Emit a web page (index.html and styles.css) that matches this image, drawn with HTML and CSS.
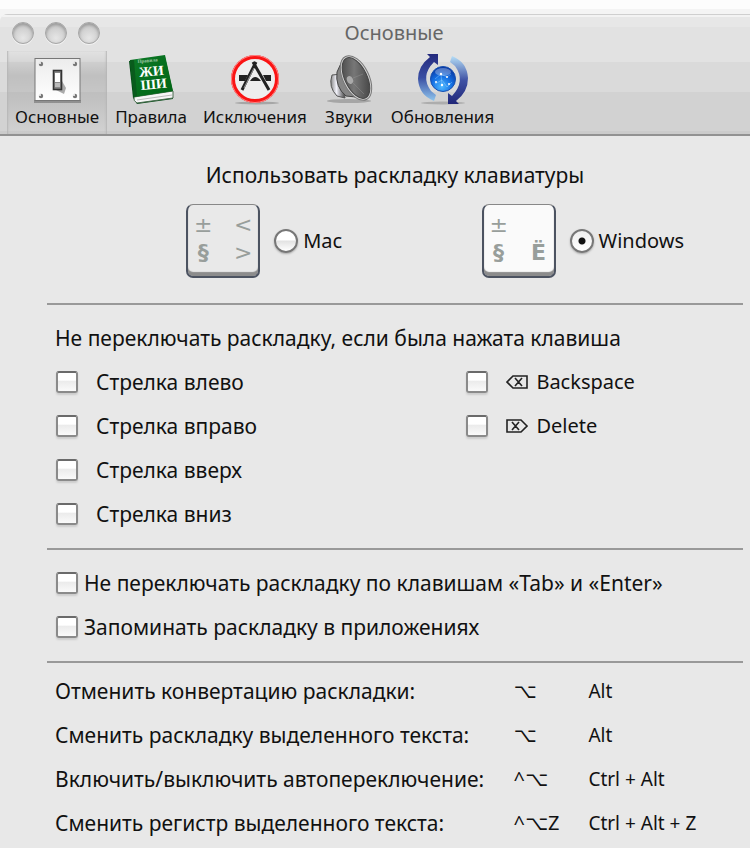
FILE: index.html
```html
<!DOCTYPE html>
<html lang="ru">
<head>
    <meta charset="UTF-8">
    <meta name="viewport" content="width=device-width, initial-scale=1.0">
    <title>Основные</title>
    <link rel="stylesheet" href="styles.css">
</head>
<body>
    <div class="window">
        <header class="header">
            <div class="titlebar">
                <div class="lights">
                    <span class="light"></span>
                    <span class="light"></span>
                    <span class="light"></span>
                </div>
                <h1 class="title">Основные</h1>
            </div>

            <nav class="toolbar">
                <button type="button" class="tool active">
                    <svg class="tool-icon" viewBox="0 0 52 52">
                        <defs>
                            <linearGradient id="plate" x1="0" y1="0" x2="0" y2="1">
                                <stop offset="0" stop-color="#ececec"/>
                                <stop offset="1" stop-color="#fff"/>
                            </linearGradient>
                        </defs>
                        <path d="M3 48.500h47" stroke="#555" stroke-width="3" opacity=".45"/>
                        <rect x="4" y="5.500" width="45" height="42" fill="url(#plate)" stroke="#777"/>
                        <g fill="#777">
                            <circle cx="10" cy="11" r="2.200"/><circle cx="44" cy="11" r="2.200"/>
                            <circle cx="10" cy="43" r="2.200"/><circle cx="44" cy="43" r="2.200"/>
                        </g>
                        <g fill="#fff">
                            <circle cx="9" cy="10" r="1"/><circle cx="43" cy="10" r="1"/>
                            <circle cx="9" cy="42" r="1"/><circle cx="43" cy="42" r="1"/>
                        </g>
                        <path d="M31 28l4 7-2 6-8-4z" fill="#aaa"/>
                        <rect x="22.500" y="17.500" width="8" height="19" fill="#888" stroke="#333" stroke-width="1.600"/>
                        <rect x="24" y="20" width="5" height="9" fill="#fff"/>
                        <path d="M24 30h5v4h-5z" fill="#bbb"/>
                    </svg>
                    <span>Основные</span>
                </button>
                <button type="button" class="tool">
                    <svg class="tool-icon" viewBox="0 0 52 52">
                        <defs>
                            <linearGradient id="cover" x1="0" y1="0" x2="1" y2="1">
                                <stop offset="0" stop-color="#0d7a28"/>
                                <stop offset="1" stop-color="#006414"/>
                            </linearGradient>
                        </defs>
                        <path d="M4 8l4 37 4 6 36-5v-7L40 4z" fill="#064d18"/>
                        <path d="M9 44l39-6v7l-36 5q-4-2-3-6z" fill="#f6f6f6" stroke="#476b4d" stroke-width="1"/>
                        <path d="M12 47l35-5" stroke="#bbb"/>
                        <path d="M5 7L40 2l8 36-39 6z" fill="url(#cover)"/>
                        <path d="M5 7l4 37 3-1L9 7z" fill="#095b1d"/>
                        <g transform="rotate(-5 26 24)" fill="#fff" text-anchor="middle" class="book-text">
                            <text x="24" y="9" font-size="5" opacity=".6">Правила</text>
                            <text x="27" y="23" font-size="14">ЖИ</text>
                            <text x="28" y="36" font-size="14">ШИ</text>
                        </g>
                    </svg>
                    <span>Правила</span>
                </button>
                <button type="button" class="tool">
                    <svg class="tool-icon" viewBox="0 0 52 52">
                        <ellipse cx="28" cy="50" rx="22" ry="1.500" fill="#888" opacity=".6"/>
                        <circle cx="26" cy="26" r="22" fill="#eee" stroke="#fa1414" stroke-width="4"/>
                        <circle cx="26" cy="26" r="23.500" fill="none" stroke="#ff8585" stroke-width="1"/>
                        <path d="M10 22h9l-3 6h-6zM34 22h8v6h-5zM21 28q5-8 11 0z" fill="#222"/>
                        <path d="M27 9L13 37M24 9l16 28" stroke="#222" stroke-width="3" fill="none"/>
                        <path d="M25 15l-10 20" stroke="#999" stroke-width="1"/>
                    </svg>
                    <span>Исключения</span>
                </button>
                <button type="button" class="tool">
                    <svg class="tool-icon" viewBox="0 0 52 52">
                        <defs>
                            <linearGradient id="cone" x1="0" y1="0" x2="1" y2="1">
                                <stop offset="0" stop-color="#3e3e3e"/>
                                <stop offset=".45" stop-color="#777"/>
                                <stop offset="1" stop-color="#383838"/>
                            </linearGradient>
                            <linearGradient id="magnet" x1="0" y1="0" x2="1" y2="0">
                                <stop offset="0" stop-color="#8a8a8a"/>
                                <stop offset=".4" stop-color="#f2f2fa"/>
                                <stop offset="1" stop-color="#444"/>
                            </linearGradient>
                        </defs>
                        <ellipse cx="26" cy="48" rx="22" ry="2" fill="#888" opacity=".6"/>
                        <path d="M9 22q-4 12 5 21l8 2-3-24z" fill="url(#magnet)" stroke="#555"/>
                        <path d="M14 19l6-13 13 38-10-1q-11-9-9-24z" fill="#858585" stroke="#444"/>
                        <ellipse cx="33" cy="25" rx="13" ry="24" transform="rotate(-26 33 25)" fill="#d0d0d0" stroke="#777"/>
                        <ellipse cx="33" cy="25" rx="11" ry="22" transform="rotate(-26 33 25)" fill="url(#cone)" stroke="#444"/>
                        <ellipse cx="27" cy="27" rx="3" ry="4" transform="rotate(-24 27 27)" fill="#aaa"/>
                        <path d="M29 29l12 12M30 25l10-4" stroke="#999" opacity=".4"/>
                    </svg>
                    <span>Звуки</span>
                </button>
                <button type="button" class="tool">
                    <svg class="tool-icon" viewBox="0 0 52 52">
                        <defs>
                            <linearGradient id="arrowLeft" x1="0" y1="0" x2="0" y2="1">
                                <stop offset="0" stop-color="#242a7d"/>
                                <stop offset=".5" stop-color="#394da2"/>
                                <stop offset="1" stop-color="#8fc5ed"/>
                            </linearGradient>
                            <linearGradient id="arrowRight" x1="0" y1="1" x2="0" y2="0">
                                <stop offset="0" stop-color="#202678"/>
                                <stop offset=".5" stop-color="#4053a5"/>
                                <stop offset="1" stop-color="#b5def7"/>
                            </linearGradient>
                            <radialGradient id="globe" cx=".45" cy=".8" r=".8">
                                <stop offset="0" stop-color="#50b9ff"/>
                                <stop offset=".5" stop-color="#1470e4"/>
                                <stop offset="1" stop-color="#07329d"/>
                            </radialGradient>
                        </defs>
                        <ellipse cx="26" cy="50" rx="22" ry="1.500" fill="#888" opacity=".5"/>
                        <path d="M10 1h11v11l-4-3Q3 23 14 38l5 4-2 6Q2 42 1 26 1 13 13 4z" fill="url(#arrowLeft)"/>
                        <path d="M42 51H31V40l4 3q14-15 3-30l-5-4 2-6q15 6 16 22 0 14-12 23z" fill="url(#arrowRight)"/>
                        <circle cx="26" cy="26" r="12.500" fill="url(#globe)" stroke="#164fb0"/>
                        <ellipse cx="26" cy="19" rx="8" ry="4" fill="#fff" opacity=".3"/>
                        <path d="M18 26l6-5 6 3 4-3M18 31l7-4 5 7 5-5M24 21l1 12" stroke="#a4dcff" stroke-width=".4" fill="none"/>
                        <g fill="#fff">
                            <circle cx="24" cy="21" r="1.200"/><circle cx="30" cy="24" r="1"/><circle cx="19" cy="29" r="1"/>
                            <circle cx="25" cy="32" r="1.200"/><circle cx="32" cy="31" r="1"/>
                        </g>
                    </svg>
                    <span>Обновления</span>
                </button>
            </nav>
        </header>

        <main class="content">
            <section class="section layout-section">
                <h2 class="heading">Использовать раскладку клавиатуры</h2>
                <div class="layouts">
                    <label class="layout">
                        <span class="key key-mac"><span>±</span><span>&lt;</span><b>§</b><span>&gt;</span></span>
                        <input type="radio" name="layout" class="radio">
                        <span>Mac</span>
                    </label>
                    <label class="layout">
                        <span class="key"><span>±</span><span></span><b>§</b><b>Ё</b></span>
                        <input type="radio" name="layout" class="radio" checked>
                        <span>Windows</span>
                    </label>
                </div>
            </section>

            <section class="section">
                <h2 class="row">Не переключать раскладку, если была нажата клавиша</h2>
                <div class="keys">
                    <div class="keys-column">
                        <label class="row option"><input type="checkbox" class="check">Стрелка влево</label>
                        <label class="row option"><input type="checkbox" class="check">Стрелка вправо</label>
                        <label class="row option"><input type="checkbox" class="check">Стрелка вверх</label>
                        <label class="row option"><input type="checkbox" class="check">Стрелка вниз</label>
                    </div>
                    <div class="keys-column">
                        <label class="row option">
                            <input type="checkbox" class="check">
                            <span class="key-name">
                                <svg class="key-icon" viewBox="0 0 22 16"><path d="M1 8l6-6h14v12H7zM9 4l7 8M16 4l-7 8"/></svg>
                                Backspace
                            </span>
                        </label>
                        <label class="row option">
                            <input type="checkbox" class="check">
                            <span class="key-name">
                                <svg class="key-icon" viewBox="0 0 22 16"><path d="M21 8l-6-6H1v12h14zM6 4l7 8M13 4l-7 8"/></svg>
                                Delete
                            </span>
                        </label>
                    </div>
                </div>
            </section>

            <section class="section">
                <label class="row option tight"><input type="checkbox" class="check">Не переключать раскладку по клавишам «Tab» и «Enter»</label>
                <label class="row option tight"><input type="checkbox" class="check">Запоминать раскладку в приложениях</label>
            </section>

            <section class="section shortcuts-section">
                <table class="shortcuts">
                    <tr>
                        <th scope="row">Отменить конвертацию раскладки:</th>
                        <td class="symbols">⌥</td>
                        <td class="combo">Alt</td>
                    </tr>
                    <tr>
                        <th scope="row">Сменить раскладку выделенного текста:</th>
                        <td class="symbols">⌥</td>
                        <td class="combo">Alt</td>
                    </tr>
                    <tr>
                        <th scope="row">Включить/выключить автопереключение:</th>
                        <td class="symbols">^⌥</td>
                        <td class="combo">Ctrl + Alt</td>
                    </tr>
                    <tr>
                        <th scope="row">Сменить регистр выделенного текста:</th>
                        <td class="symbols">^⌥Z</td>
                        <td class="combo">Ctrl + Alt + Z</td>
                    </tr>
                </table>
            </section>
        </main>
    </div>
</body>
</html>
```
FILE: styles.css
```css
* {
    margin: 0;
    padding: 0;
    box-sizing: border-box;
}

body {
    padding-top: 14px;
    background: #e8e8e8 linear-gradient(#fdfdfd 9px, #f4f4f4 9px, #f4f4f4 30px, #e8e8e8 30px) no-repeat;
    font-family: 'Lucida Grande', 'Noto Sans', sans-serif;
    font-size: 21px;
    line-height: 28px;
    color: #111;
}

h1, h2, th {
    font-size: inherit;
    font-weight: normal;
}

.window {
    background: #e8e8e8;
    border-radius: 8px 0 0 0;
    overflow: hidden;
}

.header {
    border-top: 1px solid #cfcfcf;
    border-bottom: 2px solid #929292;
    background: linear-gradient(#f3f3f3 2px, #e7e7e7 2px, #e7e7e7 12px, #e2e2e2 12px, #e2e2e2 47px, #dadada 47px, #dadada 77px, #d2d2d2 77px, #d2d2d2 116px, #cbcbcb 116px);
}

.titlebar {
    display: flex;
    align-items: center;
    height: 36px;
    padding: 0 62px 0 12px;
}

.lights {
    display: flex;
    gap: 11px;
}

.light {
    width: 22px;
    height: 22px;
    border: 1px solid #a5a5a5;
    border-radius: 50%;
    background: radial-gradient(circle at 50% 75%, #e6e6e6, #c8c8c8 75%);
    box-shadow: inset 0 2px 3px #999, 0 1px 0 #f2f2f2;
}

.title {
    flex: 1;
    text-align: center;
    font-size: 20px;
    color: #666;
}

.toolbar {
    display: flex;
    padding-left: 7px;
}

.tool {
    display: flex;
    flex-direction: column;
    align-items: center;
    padding: 2px 8px 5px;
    border: 0;
    background: none;
    font: inherit;
    font-size: 17px;
    line-height: 24px;
    color: #111;
}

.tool.active {
    background: linear-gradient(rgba(0, 0, 0, 0), rgba(0, 0, 0, 0.12) 30%, rgba(0, 0, 0, 0.08) 60%, rgba(0, 0, 0, 0));
    box-shadow: inset 2px 0 2px -1px #b5b5b5, inset -2px 0 2px -1px #b5b5b5;
}

.tool-icon {
    width: 52px;
    height: 52px;
}

.book-text {
    font-family: 'Liberation Serif', serif;
    font-weight: bold;
}

.content {
    padding: 0 7px 0 47px;
}

.section {
    padding: 11px 8px 12px;
    border-bottom: 2px solid #999;
}

.layout-section {
    padding: 25px 0;
}

.heading {
    text-align: center;
}

.layouts {
    display: grid;
    grid-template-columns: 1fr 1fr;
    gap: 34px;
    margin-top: 15px;
    padding-left: 20%;
    font-size: 20px;
}

.layout {
    display: flex;
    align-items: center;
}

.key {
    display: grid;
    grid-template-columns: 30px 30px;
    justify-content: space-between;
    justify-items: center;
    align-content: center;
    width: 74px;
    height: 74px;
    margin-right: 14px;
    padding-bottom: 4px;
    border: 2px solid #4c5361;
    border-top: 1px solid #888;
    border-radius: 7px;
    background: #fafafa;
    box-shadow: inset 0 -4px 1px #8c8c8c;
    font-family: 'DejaVu Sans', sans-serif;
    font-size: 22px;
    line-height: 28px;
    color: #989e9b;
}

.key-mac {
    background: #e9e9e9;
}

.radio,
.check {
    appearance: none;
    flex: none;
}

.radio {
    width: 24px;
    height: 24px;
    margin-right: 5px;
    border: 2px solid #777;
    border-radius: 50%;
    background: linear-gradient(#fff 45%, #e2e2e2 50%, #fff);
    box-shadow: 0 1px 2px #aaa;
}

.radio:checked {
    background: radial-gradient(circle, #111 3px, transparent 4px), linear-gradient(#eee, #fff);
}

.check {
    width: 22px;
    height: 22px;
    border: 2px solid #8a8a8a;
    border-top-color: #6a6a6a;
    border-radius: 3px;
    background: linear-gradient(#fff 40%, #ebebeb 45%, #fafafa);
    box-shadow: 0 2px 2px #ccc;
}

.row {
    display: flex;
    align-items: center;
    height: 44px;
}

.option {
    gap: 18px;
    padding-left: 1px;
}

.tight {
    gap: 6px;
}

.keys {
    display: grid;
    grid-template-columns: 3fr 2fr;
    gap: 6px;
}

.key-name {
    display: flex;
    align-items: center;
    gap: 8px;
    font-size: 20px;
}

.key-icon {
    width: 22px;
    height: 16px;
    fill: none;
    stroke: #222;
    stroke-width: 1.600;
}

.shortcuts-section {
    padding: 6px 8px 0;
    border-bottom: 0;
}

.shortcuts {
    width: 100%;
    table-layout: fixed;
    border-collapse: collapse;
}

.shortcuts th,
.shortcuts td {
    height: 44px;
    text-align: left;
    white-space: nowrap;
}

.shortcuts th {
    width: 67%;
}

.shortcuts td {
    padding-left: 3px;
}

.shortcuts .symbols {
    width: 11%;
    font-family: 'Lucida Grande', 'Noto Sans', 'DejaVu Sans', sans-serif;
    font-size: 20px;
}

.shortcuts .combo {
    font-size: 19px;
}
```
